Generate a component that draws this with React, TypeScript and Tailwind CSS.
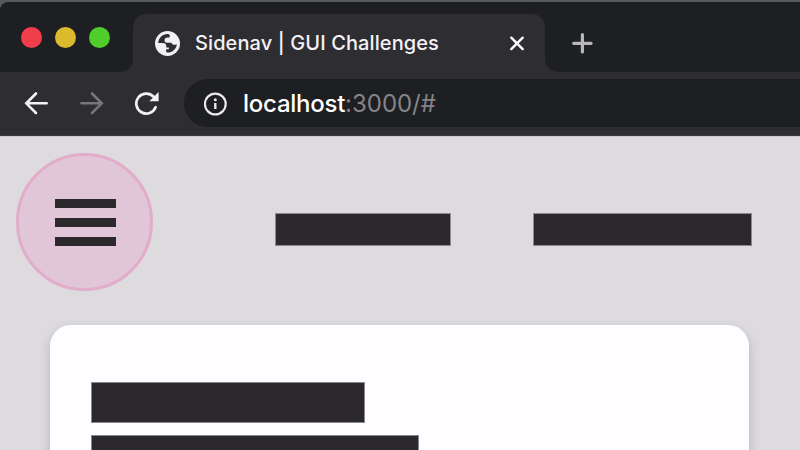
const Globe = () => (
  <svg className="size-[25px] shrink-0" viewBox="0 0 24 24" fill="none">
    <circle cx="12" cy="12" r="12" fill="#f1f0f3" />
    <path
      d="M13.200 3C8 2.300 3.600 5.900 3.100 11.500H7.600C9.700 11.500 10.800 12.500 10.800 14.300V15.800H13.300V17.600H10.700V20.500C15.900 21.300 20.400 17.900 21 12.600C18.900 13.900 16.100 13.200 15.800 11.300H11.800C9.900 11.300 8.800 10.100 9.200 8.400C9.500 7.100 10.500 6.300 11.900 6.300H13.700C14.600 5.300 14.500 3.900 13.200 3Z"
      fill="#2e2d32"
    />
  </svg>
);

const TabStrip = () => (
  <div className="flex h-[70px] shrink-0 rounded-tl-lg bg-[#1e1f22] pt-3">
    <div className="flex w-[133px] shrink-0 gap-[13px] pl-[21px] pt-[13px]">
      <i className="size-[21px] rounded-full bg-[#f23e4c]" />
      <i className="size-[21px] rounded-full bg-[#dbbb2d]" />
      <i className="size-[21px] rounded-full bg-[#4fce2b]" />
    </div>
    <div className="relative flex h-[58px] w-[412px] shrink-0 items-center rounded-t-[13px] bg-[#2e2d32] pl-[22px] pr-[20px]">
      <i className="absolute bottom-0 -left-3 size-3 bg-[radial-gradient(circle_at_0_0,transparent_11.5px,#2e2d32_12px)]" />
      <i className="absolute bottom-0 -right-3 size-3 bg-[radial-gradient(circle_at_100%_0,transparent_11.5px,#2e2d32_12px)]" />
      <Globe />
      <span className="ml-[15px] whitespace-nowrap text-[20px] font-medium leading-7 tracking-[0.1px] text-[#f3f2f5]">Sidenav | GUI Challenges</span>
      <svg className="ml-auto size-4" viewBox="0 0 16 16" stroke="#fff" strokeWidth="2.4" strokeLinecap="round">
        <path d="M2.300 2.700L13.700 14.100M13.700 2.700L2.300 14.100" />
      </svg>
    </div>
    <svg className="ml-[26px] mt-[18px] size-[22px]" viewBox="0 0 22 22" stroke="#b7b6bb" strokeWidth="3.2" strokeLinecap="round">
      <path d="M2.700 11.300H20.100M11.400 2.600V20" />
    </svg>
  </div>
);

const Toolbar = () => (
  <div className="flex h-[63px] shrink-0 items-start bg-[#2e2d32] pl-6 pt-[7px]">
    <svg className="mt-3 h-6 w-6" viewBox="0 0 24 24" fill="none" stroke="#f3f2f5" strokeWidth="2.600" strokeLinecap="round">
      <path d="M2.500 12.300H22.700M12 2.500L2.300 12.300L12 22" />
    </svg>
    <svg className="ml-8 mt-3 h-6 w-6" viewBox="0 0 24 24" fill="none" stroke="#77767b" strokeWidth="2.600" strokeLinecap="round">
      <path d="M1.500 12.300H21.500M12 2.500L21.800 12.300L12 22" />
    </svg>
    <svg className="ml-[30px] mt-3 h-6 w-[26px]" viewBox="0 0 26 24" fill="none">
      <path d="M21.600 16.200A10 10 0 1 1 19.400 5.500" stroke="#f3f2f5" strokeWidth="2.700" strokeLinecap="round" />
      <path d="M24.600 1V10.300H15.300Z" fill="#f3f2f5" />
    </svg>
    <div className="ml-6 flex h-12 flex-1 items-center rounded-l-full bg-[#1e1f22] pl-5">
      <svg className="mt-[2px] size-6" viewBox="0 0 24 24" fill="none">
        <circle cx="11.300" cy="12" r="10.400" stroke="#e9e8eb" strokeWidth="2.200" />
        <path d="M11.300 11V17" stroke="#e9e8eb" strokeWidth="2.400" />
        <circle cx="11.300" cy="7.700" r="1.500" fill="#e9e8eb" />
      </svg>
      <p className="ml-[15px] mt-[2px] whitespace-nowrap text-[24px] leading-8 tracking-[-0.03px] text-[#858489]">
        <span className="font-medium tracking-[-0.25px] text-white">localhost</span>:3000/#
      </p>
    </div>
  </div>
);

export default function App() {
  return (
    <div className="flex h-[450px] w-[800px] flex-col overflow-hidden bg-[#58595d] pt-[2px] font-['Inter','Liberation_Sans',sans-serif]">
      <TabStrip />
      <Toolbar />
      <div className="h-px shrink-0 bg-[#3a373d]" />
      <main className="flex min-h-0 flex-1 flex-col border-t border-[#c9c6cb] bg-[#dddbde]">
        <nav className="flex h-[188px] shrink-0">
          <button className="ml-4 mt-4 flex h-[138px] w-[137px] flex-col items-center justify-center gap-[10px] rounded-full border-[3px] border-[#e2accb] bg-[#e1c6d7] pl-px pt-px">
            <i className="h-[9px] w-[61px] bg-[#2b292c]" />
            <i className="h-[9px] w-[61px] bg-[#2b292c]" />
            <i className="h-[9px] w-[61px] bg-[#2b292c]" />
          </button>
          <i className="ml-[122px] mt-[76px] h-[33px] w-44 border border-[#8b898d] bg-[#2b292c]" />
          <i className="ml-[82px] mt-[76px] h-[33px] w-[219px] border border-[#8b898d] bg-[#2b292c]" />
        </nav>
        <section className="ml-[50px] h-[200px] w-[699px] shrink-0 rounded-[21px] bg-[#fefdff] pl-[41px] pt-[57px] shadow-[0_5px_12px_rgba(0,0,0,0.18)]">
          <div className="h-[41px] w-[274px] border border-[#8b898d] bg-[#2b292c]" />
          <div className="mt-3 h-[41px] w-[328px] border border-[#8b898d] bg-[#2b292c]" />
        </section>
      </main>
    </div>
  );
}
